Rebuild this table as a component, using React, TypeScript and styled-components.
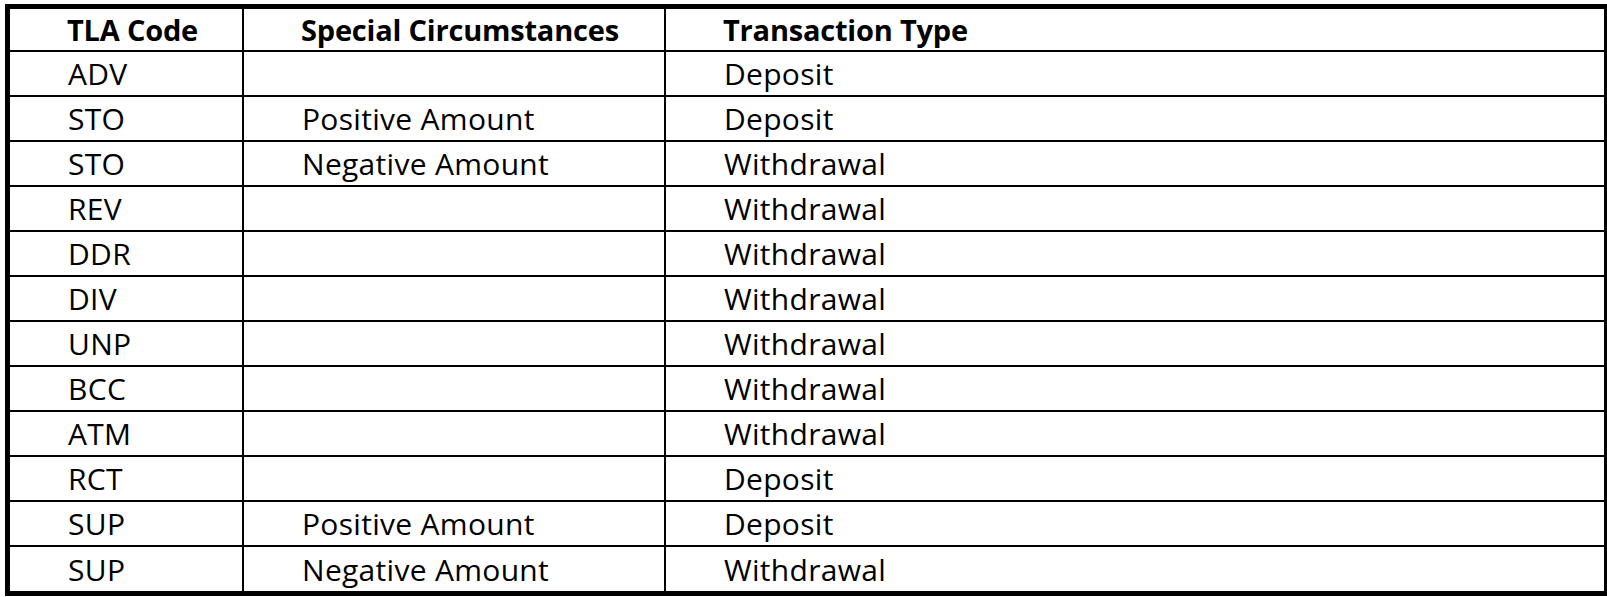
import React from "react";
import styled, { createGlobalStyle } from "styled-components";

const Global = createGlobalStyle`
  html, body {
    margin: 0;
    padding: 0;
    background: #ffffff;
    overflow: hidden;
  }
  body {
    font-family: "Open Sans", "Noto Sans", sans-serif;
    color: #000000;
  }
`;

const Page = styled.div`
  width: 1607px;
  height: 597px;
  padding: 4px 0 0 5px;
  box-sizing: border-box;
  overflow: hidden;
`;

const Table = styled.div`
  display: grid;
  grid-template-columns: 234px 422px 938px;
  width: 1594px;
  border: 5px solid #000;
  box-sizing: content-box;
  background: #fff;
`;

const Cell = styled.div<{ $header?: boolean; $last?: boolean; $lastRow?: boolean }>`
  display: flex;
  align-items: center;
  box-sizing: border-box;
  height: ${(p) => (p.$header ? 43 : p.$lastRow ? 44 : 45)}px;
  padding-left: ${(p) => (p.$header ? 57 : 58)}px;
  border-right: ${(p) => (p.$last ? "none" : "2px solid #000")};
  border-bottom: ${(p) => (p.$lastRow ? "none" : "2px solid #000")};
  font-size: ${(p) => (p.$header ? 29 : 30)}px;
  font-weight: ${(p) => (p.$header ? 700 : 400)};
  white-space: nowrap;
  letter-spacing: ${(p) => (p.$header ? "-0.2px" : "0.3px")};
`;

const headers = ["TLA Code", "Special Circumstances", "Transaction Type"];

const rows: [string, string, string][] = [
  ["ADV", "", "Deposit"],
  ["STO", "Positive Amount", "Deposit"],
  ["STO", "Negative Amount", "Withdrawal"],
  ["REV", "", "Withdrawal"],
  ["DDR", "", "Withdrawal"],
  ["DIV", "", "Withdrawal"],
  ["UNP", "", "Withdrawal"],
  ["BCC", "", "Withdrawal"],
  ["ATM", "", "Withdrawal"],
  ["RCT", "", "Deposit"],
  ["SUP", "Positive Amount", "Deposit"],
  ["SUP", "Negative Amount", "Withdrawal"],
];

export default function App() {
  return (
    <>
      <Global />
      <Page>
        <Table>
          {headers.map((h, i) => (
            <Cell key={h} $header $last={i === 2}>
              {h}
            </Cell>
          ))}
          {rows.map((r, ri) =>
            r.map((c, ci) => (
              <Cell
                key={`${ri}-${ci}`}
                $last={ci === 2}
                $lastRow={ri === rows.length - 1}
              >
                {c}
              </Cell>
            ))
          )}
        </Table>
      </Page>
    </>
  );
}
